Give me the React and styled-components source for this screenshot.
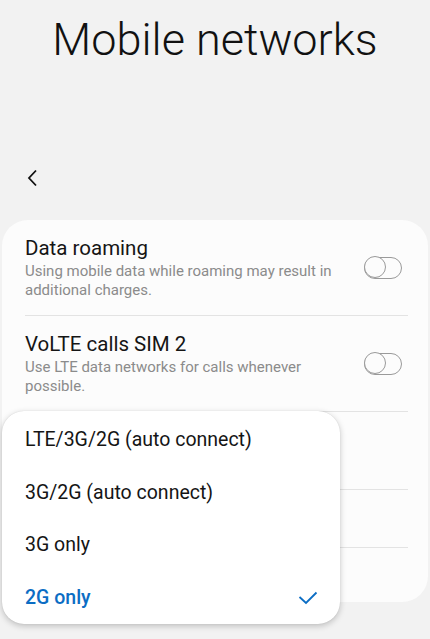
import React from "react";
import styled, { createGlobalStyle } from "styled-components";

const GlobalStyle = createGlobalStyle`
  html, body {
    margin: 0;
    padding: 0;
    background: #f2f2f2;
    font-family: Roboto, "Liberation Sans", sans-serif;
  }
`;

const Screen = styled.div`
  width: 430px;
  height: 639px;
  position: relative;
  overflow: hidden;
  background: #f2f2f2;
  display: flex;
  flex-direction: column;
`;

const Title = styled.h1`
  margin: 0;
  padding-top: 13px;
  height: 148px;
  box-sizing: border-box;
  text-align: center;
  font-weight: 300;
  font-size: 45px;
  line-height: 54px;
  color: #111;
`;

const BackBar = styled.div`
  height: 60px;
  display: flex;
  align-items: center;
  padding-left: 26px;
`;

const BackButton = styled.button`
  border: 0;
  background: none;
  padding: 0;
  width: 16px;
  height: 20px;
  display: flex;
  align-items: center;
  cursor: pointer;
`;

const Card = styled.div`
  margin: 12px 2px 0;
  background: #fcfcfc;
  border-radius: 26px;
  display: flex;
  flex-direction: column;
  padding: 0 20px 0 23px;
`;

const Row = styled.div`
  height: ${(p) => p.h}px;
  box-sizing: border-box;
  display: flex;
  align-items: center;
  justify-content: space-between;
  border-top: ${(p) => (p.first ? "none" : "1px solid #e3e3e3")};
`;

const RowText = styled.div`
  display: flex;
  flex-direction: column;
  max-width: 330px;
`;

const RowTitle = styled.div`
  font-size: 20.5px;
  line-height: 26px;
  color: #151515;
`;

const RowSub = styled.div`
  font-size: 15px;
  line-height: 19px;
  color: #8b8b8b;
  margin-top: 1px;
`;

const Toggle = styled.div`
  width: 38px;
  height: 22px;
  box-sizing: border-box;
  border: 1.5px solid #9a9a9a;
  border-radius: 11px;
  position: relative;
  margin-right: 6px;
  flex-shrink: 0;
  &::before {
    content: "";
    position: absolute;
    left: -1.5px;
    top: -1.5px;
    width: 22px;
    height: 22px;
    box-sizing: border-box;
    border: 1.5px solid #9a9a9a;
    border-radius: 50%;
    background: #fcfcfc;
  }
`;

const Menu = styled.div`
  position: absolute;
  left: 2px;
  top: 411px;
  width: 338px;
  height: 213px;
  background: #fff;
  border-radius: 22px;
  box-shadow: 0 2px 6px rgba(0, 0, 0, 0.22), 0 0 1px rgba(0, 0, 0, 0.15);
  display: flex;
  flex-direction: column;
  padding-top: 2px;
  box-sizing: border-box;
`;

const MenuItem = styled.div`
  height: 53.5px;
  display: flex;
  align-items: center;
  justify-content: space-between;
  padding: 0 22px 0 23px;
  font-size: 19.5px;
  color: ${(p) => (p.selected ? "#0b6dc4" : "#151515")};
  font-weight: ${(p) => (p.selected ? 500 : 400)};
`;

const Check = () => (
  <svg width="20" height="14" viewBox="0 0 20 14">
    <path d="M1.5 6 L8 12 L18.5 1.5" fill="none" stroke="#0b6dc4" strokeWidth="1.8" />
  </svg>
);

const Chevron = () => (
  <svg width="12" height="18" viewBox="0 0 12 18">
    <path d="M10 1.5 L3 9 L10 16.5" fill="none" stroke="#111" strokeWidth="1.8" />
  </svg>
);

const options = [
  "LTE/3G/2G (auto connect)",
  "3G/2G (auto connect)",
  "3G only",
  "2G only",
];

export default function App() {
  const selected = "2G only";
  return (
    <Screen>
      <GlobalStyle />
      <Title>Mobile networks</Title>
      <BackBar>
        <BackButton aria-label="Back">
          <Chevron />
        </BackButton>
      </BackBar>
      <Card>
        <Row h={95} first>
          <RowText>
            <RowTitle>Data roaming</RowTitle>
            <RowSub>Using mobile data while roaming may result in additional charges.</RowSub>
          </RowText>
          <Toggle />
        </Row>
        <Row h={96}>
          <RowText>
            <RowTitle>VoLTE calls SIM 2</RowTitle>
            <RowSub>Use LTE data networks for calls whenever possible.</RowSub>
          </RowText>
          <Toggle />
        </Row>
        {/* rows below are covered by the open menu */}
        <Row h={78} />
        <Row h={58} />
        <Row h={55} />
      </Card>
      <Menu>
        {options.map((o) => (
          <MenuItem key={o} selected={o === selected}>
            {o}
            {o === selected && <Check />}
          </MenuItem>
        ))}
      </Menu>
    </Screen>
  );
}
